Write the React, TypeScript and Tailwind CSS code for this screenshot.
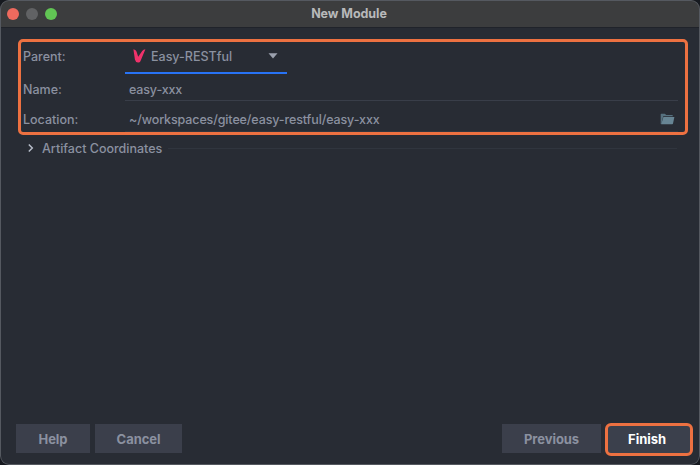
import React from "react";

function TitleBar() {
  return (
    <header className="grid h-[27px] shrink-0 grid-cols-3 items-center bg-[#3c3d3e] px-[7px]">
      <div className="flex gap-[7px]">
        <span className="size-3 rounded-full bg-[#ed6a5e]" />
        <span className="size-3 rounded-full bg-[#616264]" />
        <span className="size-3 rounded-full bg-[#61c554]" />
      </div>
      <h1 className="-ml-[2px] pt-px text-center text-[12.5px] leading-4 font-bold tracking-[-0.05px] text-[#b8b9ba]">
        New Module
      </h1>
    </header>
  );
}

function FolderIcon() {
  return (
    <svg width="15" height="12" viewBox="0 0 15 12" className="mr-[8px] shrink-0">
      <path d="M.7 11V1.3Q.7.7 1.3.7H4.8L6.3 2H12.2Q12.8 2 12.8 2.6V3.3H3.2L1.8 9V11Z" fill="#56717f" />
      <path d="M3.4 4H14.4L13 10.6Q12.8 11.3 12.2 11.3H1.2Z" fill="#678594" />
    </svg>
  );
}

function Button({ label, className }: { label: string; className: string }) {
  return (
    <button className={`text-[13px] leading-4 font-bold tracking-[-0.05px] ${className}`}>
      {label}
    </button>
  );
}

export default function App() {
  return (
    <div className="h-[465px] w-[700px] overflow-hidden bg-[#16191f] font-['Inter','Liberation_Sans',sans-serif] text-[12.5px] leading-4 font-[450] text-[#8b91a0]">
      <main className="relative flex h-[465px] flex-col overflow-hidden rounded-[9px] bg-[#282c34]">
        <TitleBar />
        <div className="h-px shrink-0 bg-[#20232a]" />
        <section className="mt-[11px] ml-[18px] flex h-[96px] w-[670px] shrink-0 flex-col rounded-[5px] border-3 border-[#ed7141] pl-[2px]">
          <div className="flex h-8 shrink-0">
            <label className="w-[102px] pt-[7px]">Parent:</label>
            <div className="flex w-[162px] border-b-2 border-[#2873f5] pt-[7px] pl-2">
              <svg width="14" height="16" viewBox="0 0 14 16" className="-mt-px mr-1 shrink-0">
                <path d="M.4 1.2Q2.7 1.4 3.5 3.4L5.2 8.8L9.2 3Q10.4 1.2 12.4 1.2L7.4 13.2Q6.6 14.8 5 14.5Q2.4 14 1.9 11.4Z" fill="#f0326b" />
              </svg>
              <span>Easy-RESTful</span>
              <svg width="10" height="6" viewBox="0 0 10 6" className="mt-[4px] mr-[9px] ml-auto">
                <path d="M.5.3H9.5L5 5.6Z" fill="#9ba1ae" />
              </svg>
            </div>
          </div>
          <div className="flex h-[27px] shrink-0">
            <label className="w-[102px] pt-[8px]">Name:</label>
            <div className="w-[553px] border-b border-[#393e49] pt-[8px] pl-1 tracking-[-0.15px]">easy-xxx</div>
          </div>
          <div className="flex h-[31px] shrink-0">
            <label className="w-[102px] pt-[11px]">Location:</label>
            <div className="flex w-[553px] items-start justify-between border-b border-[#303640] pt-[11px] pl-1">
              <span className="tracking-[-0.12px]">~/workspaces/gitee/easy-restful/easy-xxx</span>
              <span className="-mr-[5px] pt-[1px]"><FolderIcon /></span>
            </div>
          </div>
        </section>
        <div className="mt-[5px] ml-[26px] flex h-4 shrink-0 items-center">
          <svg width="8" height="10" viewBox="0 0 8 10" className="mr-2 shrink-0">
            <path d="M2.8 1.5L6.3 5L2.8 8.5" fill="none" stroke="#b5bbc7" strokeWidth="1.5" />
          </svg>
          <span className="shrink-0 pt-[2px]">Artifact Coordinates</span>
          <div className="mr-[23px] ml-[6px] h-px grow bg-[#30353e]" />
        </div>
        <footer className="mt-auto mb-[9px] flex h-[33px] shrink-0 items-start pr-[7px] pl-4">
          <Button label="Help" className="mt-px h-[29px] w-[74px] bg-[#3b3f4b]" />
          <Button label="Cancel" className="mt-px ml-[5px] h-[29px] w-[87px] bg-[#3b3f4b]" />
          <Button label="Previous" className="mt-px ml-auto h-[29px] w-[99px] bg-[#3b3f4b]" />
          <Button label="Finish" className="ml-[4px] h-[33px] w-[88px] rounded-[6px] border-3 border-[#ed7141] bg-[#3b404c] pr-[4px] pb-[2px] text-white" />
        </footer>
        <div className="pointer-events-none absolute inset-0 rounded-[9px] border border-[#555960]" />
      </main>
    </div>
  );
}
